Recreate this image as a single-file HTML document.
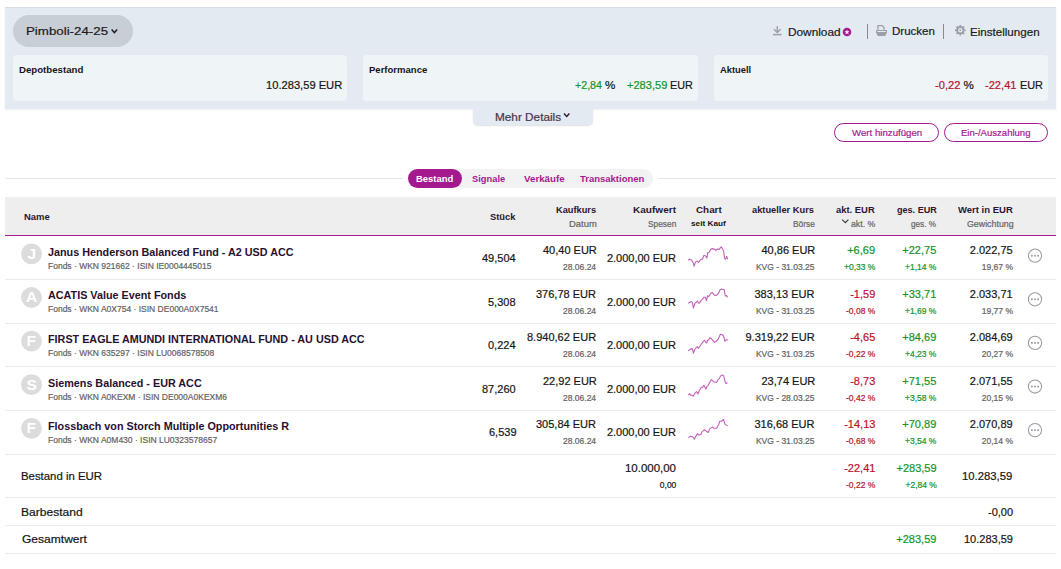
<!DOCTYPE html>
<html><head><meta charset="utf-8"><style>
html,body{margin:0;padding:0;width:1061px;height:569px;overflow:hidden;background:#fff;position:relative}
span{position:absolute;white-space:pre;font-family:"Liberation Sans", sans-serif;transform-origin:0 0}
</style></head><body>
<div style="position:absolute;left:5px;top:7px;width:1051px;height:102px;background:#e4eaf1;border-top:1px solid #d6dde5;box-sizing:border-box;box-shadow:0 1px 2px rgba(0,0,0,0.07)"></div><div style="position:absolute;left:13px;top:15px;width:120px;height:32px;background:#c8ced6;border-radius:16px"></div><svg style="position:absolute;left:0;top:0" width="1061" height="569"><polyline points="111.6,29.6 114.4,32.6 117.2,29.6" fill="none" stroke="#1b1b1b" stroke-width="1.4"/></svg><div style="position:absolute;left:13.0px;top:55px;width:334.33px;height:46px;background:#eff4f7;border-radius:3.5px"></div><div style="position:absolute;left:363.33px;top:55px;width:334.33px;height:46px;background:#eff4f7;border-radius:3.5px"></div><div style="position:absolute;left:713.66px;top:55px;width:334.33px;height:46px;background:#eff4f7;border-radius:3.5px"></div><svg style="position:absolute;left:0;top:0" width="1061" height="569">
<g stroke="#9ca1a6" stroke-width="1.5" fill="none" stroke-linecap="butt">
<line x1="777.3" y1="26.2" x2="777.3" y2="32.3"/>
<polyline points="774,29.2 777.3,32.5 780.6,29.2"/>
<line x1="773" y1="34.6" x2="781.6" y2="34.6"/>
</g>
<circle cx="847" cy="32" r="4.3" fill="#a5198f"/>
<polygon points="847.00,29.50 847.68,31.27 849.57,31.37 848.09,32.56 848.59,34.38 847.00,33.35 845.41,34.38 845.91,32.56 844.43,31.37 846.32,31.27" fill="#f2f5f8"/>
<line x1="867.5" y1="24" x2="867.5" y2="39" stroke="#8a8a8a" stroke-width="1"/>
<line x1="943.5" y1="24" x2="943.5" y2="39" stroke="#8a8a8a" stroke-width="1"/>
<g fill="#9aa0a6">
<path d="M877.3,25 h5.2 l2.2,2.2 v2.6 h-1.3 v-2 l-1.4,-1.5 h-3.4 v3.5 h-1.3 z"/>
<path d="M876,30 h11 v2.6 l-1.8,3.4 h-7.4 l-1.8,-3.4 z M877.2,31.1 v0.9 h8.6 v-0.9 z"/>
</g>
<g transform="translate(960.3,30.2)" fill="#9aa0a6">
<circle r="3.9"/>
<rect x="-1" y="-5.3" width="2" height="2.2" rx="0.4"/>
<rect x="-1" y="-5.3" width="2" height="2.2" rx="0.4" transform="rotate(45)"/>
<rect x="-1" y="-5.3" width="2" height="2.2" rx="0.4" transform="rotate(90)"/>
<rect x="-1" y="-5.3" width="2" height="2.2" rx="0.4" transform="rotate(135)"/>
<rect x="-1" y="-5.3" width="2" height="2.2" rx="0.4" transform="rotate(180)"/>
<rect x="-1" y="-5.3" width="2" height="2.2" rx="0.4" transform="rotate(225)"/>
<rect x="-1" y="-5.3" width="2" height="2.2" rx="0.4" transform="rotate(270)"/>
<rect x="-1" y="-5.3" width="2" height="2.2" rx="0.4" transform="rotate(315)"/>
<circle r="2.2" fill="#e4eaf1"/>
<rect x="-0.8" y="-0.8" width="1.6" height="1.6"/>
</g>
</svg><div style="position:absolute;left:473px;top:109px;width:120px;height:16px;background:#e4eaf1;border-radius:0 0 5px 5px;box-shadow:0 1px 1.5px rgba(0,0,0,0.12)"></div><svg style="position:absolute;left:0;top:0" width="1061" height="569"><polyline points="564,113.6 566.7,116.4 569.4,113.6" fill="none" stroke="#2b1530" stroke-width="1.4"/></svg><div style="position:absolute;left:834px;top:123px;width:105px;height:19px;border:1px solid #a5198f;border-radius:10px;box-sizing:border-box"></div><div style="position:absolute;left:944px;top:123px;width:104px;height:19px;border:1px solid #a5198f;border-radius:10px;box-sizing:border-box"></div><div style="position:absolute;left:5px;top:178px;width:398px;height:1px;background:#e6e6e6"></div><div style="position:absolute;left:658px;top:178px;width:398px;height:1px;background:#e6e6e6"></div><div style="position:absolute;left:408px;top:169px;width:245px;height:19px;background:#f2f2f2;border-radius:9.5px"></div><div style="position:absolute;left:408px;top:169px;width:54px;height:19px;background:#a5198f;border-radius:9.5px"></div><div style="position:absolute;left:5px;top:197px;width:1051px;height:38px;background:#eeeeee"></div><div style="position:absolute;left:5px;top:235px;width:1051px;height:1.3px;background:#a5198f"></div><svg style="position:absolute;left:0;top:0" width="1061" height="569"><polyline points="842.2,219.7 845.3,222.7 848.4,219.7" fill="none" stroke="#3a3a3a" stroke-width="1.15"/></svg><div style="position:absolute;left:5px;top:279px;width:1051px;height:1px;background:#ebebeb"></div><div style="position:absolute;left:5px;top:323px;width:1051px;height:1px;background:#ebebeb"></div><div style="position:absolute;left:5px;top:366px;width:1051px;height:1px;background:#ebebeb"></div><div style="position:absolute;left:5px;top:410px;width:1051px;height:1px;background:#ebebeb"></div><div style="position:absolute;left:5px;top:454px;width:1051px;height:1px;background:#ebebeb"></div><svg style="position:absolute;left:0;top:0" width="1061" height="569"><circle cx="31.5" cy="253.90" r="10.4" fill="#dcdcdc"/><circle cx="1035" cy="255.70" r="6.6" fill="none" stroke="#979ca1" stroke-width="1.05"/><rect x="1031.05" y="254.85" width="1.7" height="1.7" fill="#979ca1"/><rect x="1034.15" y="254.85" width="1.7" height="1.7" fill="#979ca1"/><rect x="1037.25" y="254.85" width="1.7" height="1.7" fill="#979ca1"/><polyline points="688.29,260.24 689.49,259.19 691.24,259.89 692.65,261.65 693.70,264.11 694.05,266.22 695.11,263.06 696.16,261.30 697.57,261.30 698.41,262.35 700.03,260.24 701.08,259.33 702.49,259.19 703.89,255.33 705.30,255.68 706.91,258.14 707.76,252.51 709.16,252.30 710.92,249.00 712.33,248.65 714.79,249.35 715.84,250.41 717.25,249.00 719.35,249.35 720.41,247.60 721.46,246.89 722.52,249.00 723.57,250.76 724.62,258.49 725.68,259.19 726.73,256.38 727.65,259.19" fill="none" stroke="#c461bb" stroke-width="1.1" stroke-linejoin="round"/><circle cx="31.5" cy="297.50" r="10.4" fill="#dcdcdc"/><circle cx="1035" cy="299.30" r="6.6" fill="none" stroke="#979ca1" stroke-width="1.05"/><rect x="1031.05" y="298.45" width="1.7" height="1.7" fill="#979ca1"/><rect x="1034.15" y="298.45" width="1.7" height="1.7" fill="#979ca1"/><rect x="1037.25" y="298.45" width="1.7" height="1.7" fill="#979ca1"/><polyline points="688.29,303.19 690.54,301.78 691.60,301.78 692.65,303.19 693.35,308.11 694.05,306.00 695.11,303.19 696.87,301.78 697.57,301.08 698.62,303.19 699.33,303.19 701.08,300.38 702.49,299.33 703.89,297.22 705.30,297.22 706.56,300.73 707.55,295.81 708.81,296.51 710.92,293.00 712.33,292.65 714.43,295.11 716.54,295.46 718.30,293.70 720.06,289.84 721.46,289.00 723.22,289.49 724.13,289.49 725.33,296.16 726.38,295.46 727.79,297.22" fill="none" stroke="#c461bb" stroke-width="1.1" stroke-linejoin="round"/><circle cx="31.5" cy="341.10" r="10.4" fill="#dcdcdc"/><circle cx="1035" cy="342.90" r="6.6" fill="none" stroke="#979ca1" stroke-width="1.05"/><rect x="1031.05" y="342.05" width="1.7" height="1.7" fill="#979ca1"/><rect x="1034.15" y="342.05" width="1.7" height="1.7" fill="#979ca1"/><rect x="1037.25" y="342.05" width="1.7" height="1.7" fill="#979ca1"/><polyline points="688.29,350.76 690.54,349.00 692.30,348.65 693.35,353.22 695.11,349.00 697.22,346.54 698.62,348.30 701.08,344.43 704.24,340.22 706.56,343.03 707.76,340.22 708.81,339.87 709.87,337.76 711.62,338.81 714.43,342.33 716.54,340.92 717.95,339.51 720.41,334.24 722.16,334.60 723.57,336.00 724.98,341.27 726.38,339.51 727.65,340.22" fill="none" stroke="#c461bb" stroke-width="1.1" stroke-linejoin="round"/><circle cx="31.5" cy="384.70" r="10.4" fill="#dcdcdc"/><circle cx="1035" cy="386.50" r="6.6" fill="none" stroke="#979ca1" stroke-width="1.05"/><rect x="1031.05" y="385.65" width="1.7" height="1.7" fill="#979ca1"/><rect x="1034.15" y="385.65" width="1.7" height="1.7" fill="#979ca1"/><rect x="1037.25" y="385.65" width="1.7" height="1.7" fill="#979ca1"/><polyline points="688.29,395.11 689.49,393.70 690.54,395.11 691.60,395.11 693.35,396.16 694.76,393.35 696.51,391.60 697.92,394.06 698.97,391.24 701.08,387.73 702.49,387.38 703.89,385.27 706.00,389.14 706.70,386.68 708.11,385.62 709.52,382.81 711.27,379.65 712.68,380.70 713.73,381.76 716.54,382.46 717.95,379.65 719.35,378.60 720.41,376.14 722.16,375.08 723.57,375.43 724.98,381.41 726.03,383.51 727.65,382.81" fill="none" stroke="#c461bb" stroke-width="1.1" stroke-linejoin="round"/><circle cx="31.5" cy="428.30" r="10.4" fill="#dcdcdc"/><circle cx="1035" cy="430.10" r="6.6" fill="none" stroke="#979ca1" stroke-width="1.05"/><rect x="1031.05" y="429.25" width="1.7" height="1.7" fill="#979ca1"/><rect x="1034.15" y="429.25" width="1.7" height="1.7" fill="#979ca1"/><rect x="1037.25" y="429.25" width="1.7" height="1.7" fill="#979ca1"/><polyline points="688.29,437.41 690.54,436.35 692.65,436.70 694.41,439.16 695.81,436.35 697.57,433.54 698.62,435.30 701.08,434.24 701.78,432.14 704.60,429.68 706.00,431.08 708.11,432.49 709.87,428.62 712.68,426.87 713.73,428.27 716.54,428.27 718.65,424.76 719.70,421.24 721.46,421.24 723.57,419.49 724.98,424.05 726.38,425.11 727.65,425.81" fill="none" stroke="#c461bb" stroke-width="1.1" stroke-linejoin="round"/></svg><div style="position:absolute;left:5px;top:497px;width:1051px;height:1px;background:#ebebeb"></div><div style="position:absolute;left:5px;top:525px;width:1051px;height:1px;background:#ebebeb"></div><div style="position:absolute;left:5px;top:553px;width:1051px;height:1px;background:#ebebeb"></div>
<span style="left:26.36px;top:25px;font-size:11.7px;line-height:11.7px;color:#1b1b1b;-webkit-text-stroke:0.2px currentColor;transform:scaleX(1.1380);">Pimboli-24-25</span><span style="left:18.80px;top:66px;font-size:8.7px;line-height:8.7px;color:#151515;font-weight:700;transform:scaleX(1.1103);">Depotbestand</span><span style="left:265.94px;top:79px;font-size:11.6px;line-height:11.6px;color:#151515;-webkit-text-stroke:0.2px currentColor;transform:scaleX(0.9615);">10.283,59 EUR</span><span style="left:369.00px;top:66px;font-size:8.7px;line-height:8.7px;color:#151515;font-weight:700;transform:scaleX(1.0962);">Performance</span><span style="left:574.50px;top:79px;font-size:11.6px;line-height:11.6px;color:#14941f;-webkit-text-stroke:0.2px currentColor;transform:scaleX(0.9200);">+2,84</span><span style="left:605.00px;top:79px;font-size:11.6px;line-height:11.6px;color:#151515;-webkit-text-stroke:0.2px currentColor;">%</span><span style="left:626.70px;top:79px;font-size:11.6px;line-height:11.6px;color:#14941f;-webkit-text-stroke:0.2px currentColor;transform:scaleX(0.9548);">+283,59</span><span style="left:669.67px;top:79px;font-size:11.6px;line-height:11.6px;color:#151515;-webkit-text-stroke:0.2px currentColor;transform:scaleX(0.9304);">EUR</span><span style="left:719.50px;top:66px;font-size:8.7px;line-height:8.7px;color:#151515;font-weight:700;transform:scaleX(1.0759);">Aktuell</span><span style="left:935.00px;top:79px;font-size:11.6px;line-height:11.6px;color:#bb1029;-webkit-text-stroke:0.2px currentColor;transform:scaleX(0.9615);">-0,22</span><span style="left:963.50px;top:79px;font-size:11.6px;line-height:11.6px;color:#151515;-webkit-text-stroke:0.2px currentColor;">%</span><span style="left:985.00px;top:79px;font-size:11.6px;line-height:11.6px;color:#bb1029;-webkit-text-stroke:0.2px currentColor;transform:scaleX(0.9576);">-22,41</span><span style="left:1019.66px;top:79px;font-size:11.6px;line-height:11.6px;color:#151515;-webkit-text-stroke:0.2px currentColor;transform:scaleX(0.9391);">EUR</span><span style="left:787.78px;top:26px;font-size:11.6px;line-height:11.6px;color:#1a1a1a;-webkit-text-stroke:0.2px currentColor;transform:scaleX(1.0200);">Download</span><span style="left:891.91px;top:25px;font-size:11.6px;line-height:11.6px;color:#1a1a1a;-webkit-text-stroke:0.2px currentColor;transform:scaleX(0.9929);">Drucken</span><span style="left:970.00px;top:26px;font-size:11.6px;line-height:11.6px;color:#1a1a1a;-webkit-text-stroke:0.2px currentColor;">Einstellungen</span><span style="left:494.70px;top:112px;font-size:10.7px;line-height:10.7px;color:#4a3548;-webkit-text-stroke:0.2px currentColor;transform:scaleX(1.1017);">Mehr Details</span><span style="left:851.60px;top:128px;font-size:9.4px;line-height:9.4px;color:#a5198f;-webkit-text-stroke:0.2px currentColor;transform:scaleX(1.0309);">Wert hinzufügen</span><span style="left:961.40px;top:128px;font-size:9.4px;line-height:9.4px;color:#a5198f;-webkit-text-stroke:0.2px currentColor;transform:scaleX(1.0176);">Ein-/Auszahlung</span><span style="left:416.20px;top:175px;font-size:8.7px;line-height:8.7px;color:#ffffff;font-weight:700;transform:scaleX(1.0882);">Bestand</span><span style="left:472.00px;top:175px;font-size:8.7px;line-height:8.7px;color:#a5198f;font-weight:700;transform:scaleX(1.0742);">Signale</span><span style="left:523.50px;top:175px;font-size:8.7px;line-height:8.7px;color:#a5198f;font-weight:700;transform:scaleX(1.1222);">Verkäufe</span><span style="left:580.20px;top:175px;font-size:8.7px;line-height:8.7px;color:#a5198f;font-weight:700;transform:scaleX(1.0915);">Transaktionen</span><span style="left:24.30px;top:213px;font-size:8.7px;line-height:8.7px;color:#2b1530;font-weight:700;transform:scaleX(1.0875);">Name</span><span style="left:490.20px;top:213px;font-size:8.7px;line-height:8.7px;color:#2b1530;font-weight:700;transform:scaleX(1.0750);">Stück</span><span style="left:555.60px;top:206px;font-size:8.7px;line-height:8.7px;color:#2b1530;font-weight:700;transform:scaleX(1.0632);">Kaufkurs</span><span style="left:568.80px;top:220px;font-size:9px;line-height:9px;color:#646464;-webkit-text-stroke:0.2px currentColor;transform:scaleX(1.0462);">Datum</span><span style="left:633.00px;top:206px;font-size:8.7px;line-height:8.7px;color:#2b1530;font-weight:700;transform:scaleX(1.1568);">Kaufwert</span><span style="left:648.00px;top:220px;font-size:9px;line-height:9px;color:#646464;-webkit-text-stroke:0.2px currentColor;transform:scaleX(0.9267);">Spesen</span><span style="left:695.55px;top:206px;font-size:8.7px;line-height:8.7px;color:#2b1530;font-weight:700;transform:scaleX(1.1348);">Chart</span><span style="left:691.00px;top:220px;font-size:8px;line-height:8px;color:#151515;font-weight:700;transform:scaleX(1.0294);">seit Kauf</span><span style="left:752.00px;top:206px;font-size:8.7px;line-height:8.7px;color:#2b1530;font-weight:700;transform:scaleX(1.0690);">aktueller Kurs</span><span style="left:792.70px;top:220px;font-size:9px;line-height:9px;color:#646464;-webkit-text-stroke:0.2px currentColor;transform:scaleX(0.9261);">Börse</span><span style="left:836.00px;top:206px;font-size:8.7px;line-height:8.7px;color:#2b1530;font-weight:700;transform:scaleX(1.0833);">akt. EUR</span><span style="left:850.70px;top:220px;font-size:9px;line-height:9px;color:#646464;-webkit-text-stroke:0.2px currentColor;transform:scaleX(0.9720);">akt. %</span><span style="left:896.80px;top:206px;font-size:8.7px;line-height:8.7px;color:#2b1530;font-weight:700;transform:scaleX(1.0421);">ges. EUR</span><span style="left:911.00px;top:220px;font-size:9px;line-height:9px;color:#646464;-webkit-text-stroke:0.2px currentColor;transform:scaleX(0.9071);">ges. %</span><span style="left:958.00px;top:206px;font-size:8.7px;line-height:8.7px;color:#2b1530;font-weight:700;transform:scaleX(1.0940);">Wert in EUR</span><span style="left:966.60px;top:220px;font-size:9px;line-height:9px;color:#646464;-webkit-text-stroke:0.2px currentColor;transform:scaleX(0.9809);">Gewichtung</span><span style="left:27.60px;top:246px;font-size:15.5px;line-height:15.5px;color:#ffffff;font-weight:700;">J</span><span style="left:48.00px;top:247px;font-size:11.3px;line-height:11.3px;color:#2a1030;font-weight:700;transform:scaleX(0.9550);">Janus Henderson Balanced Fund - A2 USD ACC</span><span style="left:48.00px;top:262px;font-size:8.5px;line-height:8.5px;color:#636363;-webkit-text-stroke:0.2px currentColor;">Fonds · WKN 921662 · ISIN IE0004445015</span><span style="left:482.00px;top:253px;font-size:11px;line-height:11px;color:#151515;-webkit-text-stroke:0.2px currentColor;">49,504</span><span style="left:543.00px;top:245px;font-size:11px;line-height:11px;color:#151515;-webkit-text-stroke:0.2px currentColor;">40,40 EUR</span><span style="left:563.00px;top:263px;font-size:8.5px;line-height:8.5px;color:#636363;-webkit-text-stroke:0.2px currentColor;">28.06.24</span><span style="left:606.90px;top:253px;font-size:11px;line-height:11px;color:#151515;-webkit-text-stroke:0.2px currentColor;">2.000,00 EUR</span><span style="left:761.50px;top:245px;font-size:11px;line-height:11px;color:#151515;-webkit-text-stroke:0.2px currentColor;">40,86 EUR</span><span style="left:755.90px;top:263px;font-size:8.5px;line-height:8.5px;color:#636363;-webkit-text-stroke:0.2px currentColor;">KVG - 31.03.25</span><span style="left:847.20px;top:245px;font-size:11px;line-height:11px;color:#14941f;-webkit-text-stroke:0.2px currentColor;">+6,69</span><span style="left:844.00px;top:263px;font-size:8.5px;line-height:8.5px;color:#14941f;-webkit-text-stroke:0.2px currentColor;">+0,33 %</span><span style="left:902.30px;top:245px;font-size:11px;line-height:11px;color:#14941f;-webkit-text-stroke:0.2px currentColor;">+22,75</span><span style="left:905.00px;top:263px;font-size:8.5px;line-height:8.5px;color:#14941f;-webkit-text-stroke:0.2px currentColor;">+1,14 %</span><span style="left:969.80px;top:245px;font-size:11px;line-height:11px;color:#151515;-webkit-text-stroke:0.2px currentColor;">2.022,75</span><span style="left:981.80px;top:263px;font-size:8.5px;line-height:8.5px;color:#636363;-webkit-text-stroke:0.2px currentColor;">19,67 %</span><span style="left:26.10px;top:289px;font-size:15.5px;line-height:15.5px;color:#ffffff;font-weight:700;">A</span><span style="left:48.00px;top:290px;font-size:11.3px;line-height:11.3px;color:#2a1030;font-weight:700;transform:scaleX(0.9550);">ACATIS Value Event Fonds</span><span style="left:48.00px;top:305px;font-size:8.5px;line-height:8.5px;color:#636363;-webkit-text-stroke:0.2px currentColor;">Fonds · WKN A0X754 · ISIN DE000A0X7541</span><span style="left:488.00px;top:297px;font-size:11px;line-height:11px;color:#151515;-webkit-text-stroke:0.2px currentColor;">5,308</span><span style="left:536.00px;top:289px;font-size:11px;line-height:11px;color:#151515;-webkit-text-stroke:0.2px currentColor;">376,78 EUR</span><span style="left:563.00px;top:307px;font-size:8.5px;line-height:8.5px;color:#636363;-webkit-text-stroke:0.2px currentColor;">28.06.24</span><span style="left:606.90px;top:297px;font-size:11px;line-height:11px;color:#151515;-webkit-text-stroke:0.2px currentColor;">2.000,00 EUR</span><span style="left:754.50px;top:289px;font-size:11px;line-height:11px;color:#151515;-webkit-text-stroke:0.2px currentColor;">383,13 EUR</span><span style="left:755.90px;top:307px;font-size:8.5px;line-height:8.5px;color:#636363;-webkit-text-stroke:0.2px currentColor;">KVG - 31.03.25</span><span style="left:850.20px;top:289px;font-size:11px;line-height:11px;color:#bb1029;-webkit-text-stroke:0.2px currentColor;">-1,59</span><span style="left:846.00px;top:307px;font-size:8.5px;line-height:8.5px;color:#bb1029;-webkit-text-stroke:0.2px currentColor;">-0,08 %</span><span style="left:902.30px;top:289px;font-size:11px;line-height:11px;color:#14941f;-webkit-text-stroke:0.2px currentColor;">+33,71</span><span style="left:905.00px;top:307px;font-size:8.5px;line-height:8.5px;color:#14941f;-webkit-text-stroke:0.2px currentColor;">+1,69 %</span><span style="left:969.80px;top:289px;font-size:11px;line-height:11px;color:#151515;-webkit-text-stroke:0.2px currentColor;">2.033,71</span><span style="left:981.80px;top:307px;font-size:8.5px;line-height:8.5px;color:#636363;-webkit-text-stroke:0.2px currentColor;">19,77 %</span><span style="left:26.60px;top:333px;font-size:15.5px;line-height:15.5px;color:#ffffff;font-weight:700;">F</span><span style="left:48.00px;top:334px;font-size:11.3px;line-height:11.3px;color:#2a1030;font-weight:700;transform:scaleX(0.9550);">FIRST EAGLE AMUNDI INTERNATIONAL FUND - AU USD ACC</span><span style="left:48.00px;top:349px;font-size:8.5px;line-height:8.5px;color:#636363;-webkit-text-stroke:0.2px currentColor;">Fonds · WKN 635297 · ISIN LU0068578508</span><span style="left:488.00px;top:340px;font-size:11px;line-height:11px;color:#151515;-webkit-text-stroke:0.2px currentColor;">0,224</span><span style="left:527.00px;top:332px;font-size:11px;line-height:11px;color:#151515;-webkit-text-stroke:0.2px currentColor;">8.940,62 EUR</span><span style="left:563.00px;top:350px;font-size:8.5px;line-height:8.5px;color:#636363;-webkit-text-stroke:0.2px currentColor;">28.06.24</span><span style="left:606.90px;top:340px;font-size:11px;line-height:11px;color:#151515;-webkit-text-stroke:0.2px currentColor;">2.000,00 EUR</span><span style="left:745.50px;top:332px;font-size:11px;line-height:11px;color:#151515;-webkit-text-stroke:0.2px currentColor;">9.319,22 EUR</span><span style="left:755.90px;top:350px;font-size:8.5px;line-height:8.5px;color:#636363;-webkit-text-stroke:0.2px currentColor;">KVG - 31.03.25</span><span style="left:850.20px;top:332px;font-size:11px;line-height:11px;color:#bb1029;-webkit-text-stroke:0.2px currentColor;">-4,65</span><span style="left:846.00px;top:350px;font-size:8.5px;line-height:8.5px;color:#bb1029;-webkit-text-stroke:0.2px currentColor;">-0,22 %</span><span style="left:902.30px;top:332px;font-size:11px;line-height:11px;color:#14941f;-webkit-text-stroke:0.2px currentColor;">+84,69</span><span style="left:905.00px;top:350px;font-size:8.5px;line-height:8.5px;color:#14941f;-webkit-text-stroke:0.2px currentColor;">+4,23 %</span><span style="left:969.80px;top:332px;font-size:11px;line-height:11px;color:#151515;-webkit-text-stroke:0.2px currentColor;">2.084,69</span><span style="left:981.80px;top:350px;font-size:8.5px;line-height:8.5px;color:#636363;-webkit-text-stroke:0.2px currentColor;">20,27 %</span><span style="left:26.60px;top:377px;font-size:15.5px;line-height:15.5px;color:#ffffff;font-weight:700;">S</span><span style="left:48.00px;top:378px;font-size:11.3px;line-height:11.3px;color:#2a1030;font-weight:700;transform:scaleX(0.9550);">Siemens Balanced - EUR ACC</span><span style="left:48.00px;top:393px;font-size:8.5px;line-height:8.5px;color:#636363;-webkit-text-stroke:0.2px currentColor;">Fonds · WKN A0KEXM · ISIN DE000A0KEXM6</span><span style="left:482.00px;top:384px;font-size:11px;line-height:11px;color:#151515;-webkit-text-stroke:0.2px currentColor;">87,260</span><span style="left:543.00px;top:376px;font-size:11px;line-height:11px;color:#151515;-webkit-text-stroke:0.2px currentColor;">22,92 EUR</span><span style="left:563.00px;top:394px;font-size:8.5px;line-height:8.5px;color:#636363;-webkit-text-stroke:0.2px currentColor;">28.06.24</span><span style="left:606.90px;top:384px;font-size:11px;line-height:11px;color:#151515;-webkit-text-stroke:0.2px currentColor;">2.000,00 EUR</span><span style="left:761.50px;top:376px;font-size:11px;line-height:11px;color:#151515;-webkit-text-stroke:0.2px currentColor;">23,74 EUR</span><span style="left:755.90px;top:394px;font-size:8.5px;line-height:8.5px;color:#636363;-webkit-text-stroke:0.2px currentColor;">KVG - 28.03.25</span><span style="left:850.20px;top:376px;font-size:11px;line-height:11px;color:#bb1029;-webkit-text-stroke:0.2px currentColor;">-8,73</span><span style="left:846.00px;top:394px;font-size:8.5px;line-height:8.5px;color:#bb1029;-webkit-text-stroke:0.2px currentColor;">-0,42 %</span><span style="left:902.30px;top:376px;font-size:11px;line-height:11px;color:#14941f;-webkit-text-stroke:0.2px currentColor;">+71,55</span><span style="left:905.00px;top:394px;font-size:8.5px;line-height:8.5px;color:#14941f;-webkit-text-stroke:0.2px currentColor;">+3,58 %</span><span style="left:969.80px;top:376px;font-size:11px;line-height:11px;color:#151515;-webkit-text-stroke:0.2px currentColor;">2.071,55</span><span style="left:981.80px;top:394px;font-size:8.5px;line-height:8.5px;color:#636363;-webkit-text-stroke:0.2px currentColor;">20,15 %</span><span style="left:26.60px;top:420px;font-size:15.5px;line-height:15.5px;color:#ffffff;font-weight:700;">F</span><span style="left:48.00px;top:421px;font-size:11.3px;line-height:11.3px;color:#2a1030;font-weight:700;transform:scaleX(0.9550);">Flossbach von Storch Multiple Opportunities R</span><span style="left:48.00px;top:436px;font-size:8.5px;line-height:8.5px;color:#636363;-webkit-text-stroke:0.2px currentColor;">Fonds · WKN A0M430 · ISIN LU0323578657</span><span style="left:489.00px;top:427px;font-size:11px;line-height:11px;color:#151515;-webkit-text-stroke:0.2px currentColor;">6,539</span><span style="left:536.00px;top:419px;font-size:11px;line-height:11px;color:#151515;-webkit-text-stroke:0.2px currentColor;">305,84 EUR</span><span style="left:563.00px;top:437px;font-size:8.5px;line-height:8.5px;color:#636363;-webkit-text-stroke:0.2px currentColor;">28.06.24</span><span style="left:606.90px;top:427px;font-size:11px;line-height:11px;color:#151515;-webkit-text-stroke:0.2px currentColor;">2.000,00 EUR</span><span style="left:754.50px;top:419px;font-size:11px;line-height:11px;color:#151515;-webkit-text-stroke:0.2px currentColor;">316,68 EUR</span><span style="left:755.90px;top:437px;font-size:8.5px;line-height:8.5px;color:#636363;-webkit-text-stroke:0.2px currentColor;">KVG - 31.03.25</span><span style="left:844.20px;top:419px;font-size:11px;line-height:11px;color:#bb1029;-webkit-text-stroke:0.2px currentColor;">-14,13</span><span style="left:846.00px;top:437px;font-size:8.5px;line-height:8.5px;color:#bb1029;-webkit-text-stroke:0.2px currentColor;">-0,68 %</span><span style="left:902.30px;top:419px;font-size:11px;line-height:11px;color:#14941f;-webkit-text-stroke:0.2px currentColor;">+70,89</span><span style="left:905.00px;top:437px;font-size:8.5px;line-height:8.5px;color:#14941f;-webkit-text-stroke:0.2px currentColor;">+3,54 %</span><span style="left:969.80px;top:419px;font-size:11px;line-height:11px;color:#151515;-webkit-text-stroke:0.2px currentColor;">2.070,89</span><span style="left:981.80px;top:437px;font-size:8.5px;line-height:8.5px;color:#636363;-webkit-text-stroke:0.2px currentColor;">20,14 %</span><span style="left:21.09px;top:471px;font-size:11.3px;line-height:11.3px;color:#151515;-webkit-text-stroke:0.2px currentColor;transform:scaleX(1.0076);">Bestand in EUR</span><span style="left:624.76px;top:463px;font-size:11px;line-height:11px;color:#151515;-webkit-text-stroke:0.2px currentColor;transform:scaleX(1.0417);">10.000,00</span><span style="left:659.80px;top:481px;font-size:8.5px;line-height:8.5px;color:#151515;-webkit-text-stroke:0.2px currentColor;">0,00</span><span style="left:844.20px;top:463px;font-size:11px;line-height:11px;color:#bb1029;-webkit-text-stroke:0.2px currentColor;">-22,41</span><span style="left:846.00px;top:481px;font-size:8.5px;line-height:8.5px;color:#bb1029;-webkit-text-stroke:0.2px currentColor;">-0,22 %</span><span style="left:896.50px;top:463px;font-size:11px;line-height:11px;color:#14941f;-webkit-text-stroke:0.2px currentColor;">+283,59</span><span style="left:905.50px;top:481px;font-size:8.5px;line-height:8.5px;color:#14941f;-webkit-text-stroke:0.2px currentColor;">+2,84 %</span><span style="left:962.47px;top:471px;font-size:11px;line-height:11px;color:#151515;-webkit-text-stroke:0.2px currentColor;transform:scaleX(1.0271);">10.283,59</span><span style="left:21.03px;top:507px;font-size:11.3px;line-height:11.3px;color:#151515;-webkit-text-stroke:0.2px currentColor;transform:scaleX(1.0661);">Barbestand</span><span style="left:988.00px;top:507px;font-size:11px;line-height:11px;color:#151515;-webkit-text-stroke:0.2px currentColor;">-0,00</span><span style="left:22.10px;top:534px;font-size:11.3px;line-height:11.3px;color:#151515;-webkit-text-stroke:0.2px currentColor;transform:scaleX(1.0656);">Gesamtwert</span><span style="left:896.30px;top:534px;font-size:11px;line-height:11px;color:#14941f;-webkit-text-stroke:0.2px currentColor;">+283,59</span><span style="left:964.00px;top:534px;font-size:11px;line-height:11px;color:#151515;-webkit-text-stroke:0.2px currentColor;">10.283,59</span>

</body></html>
